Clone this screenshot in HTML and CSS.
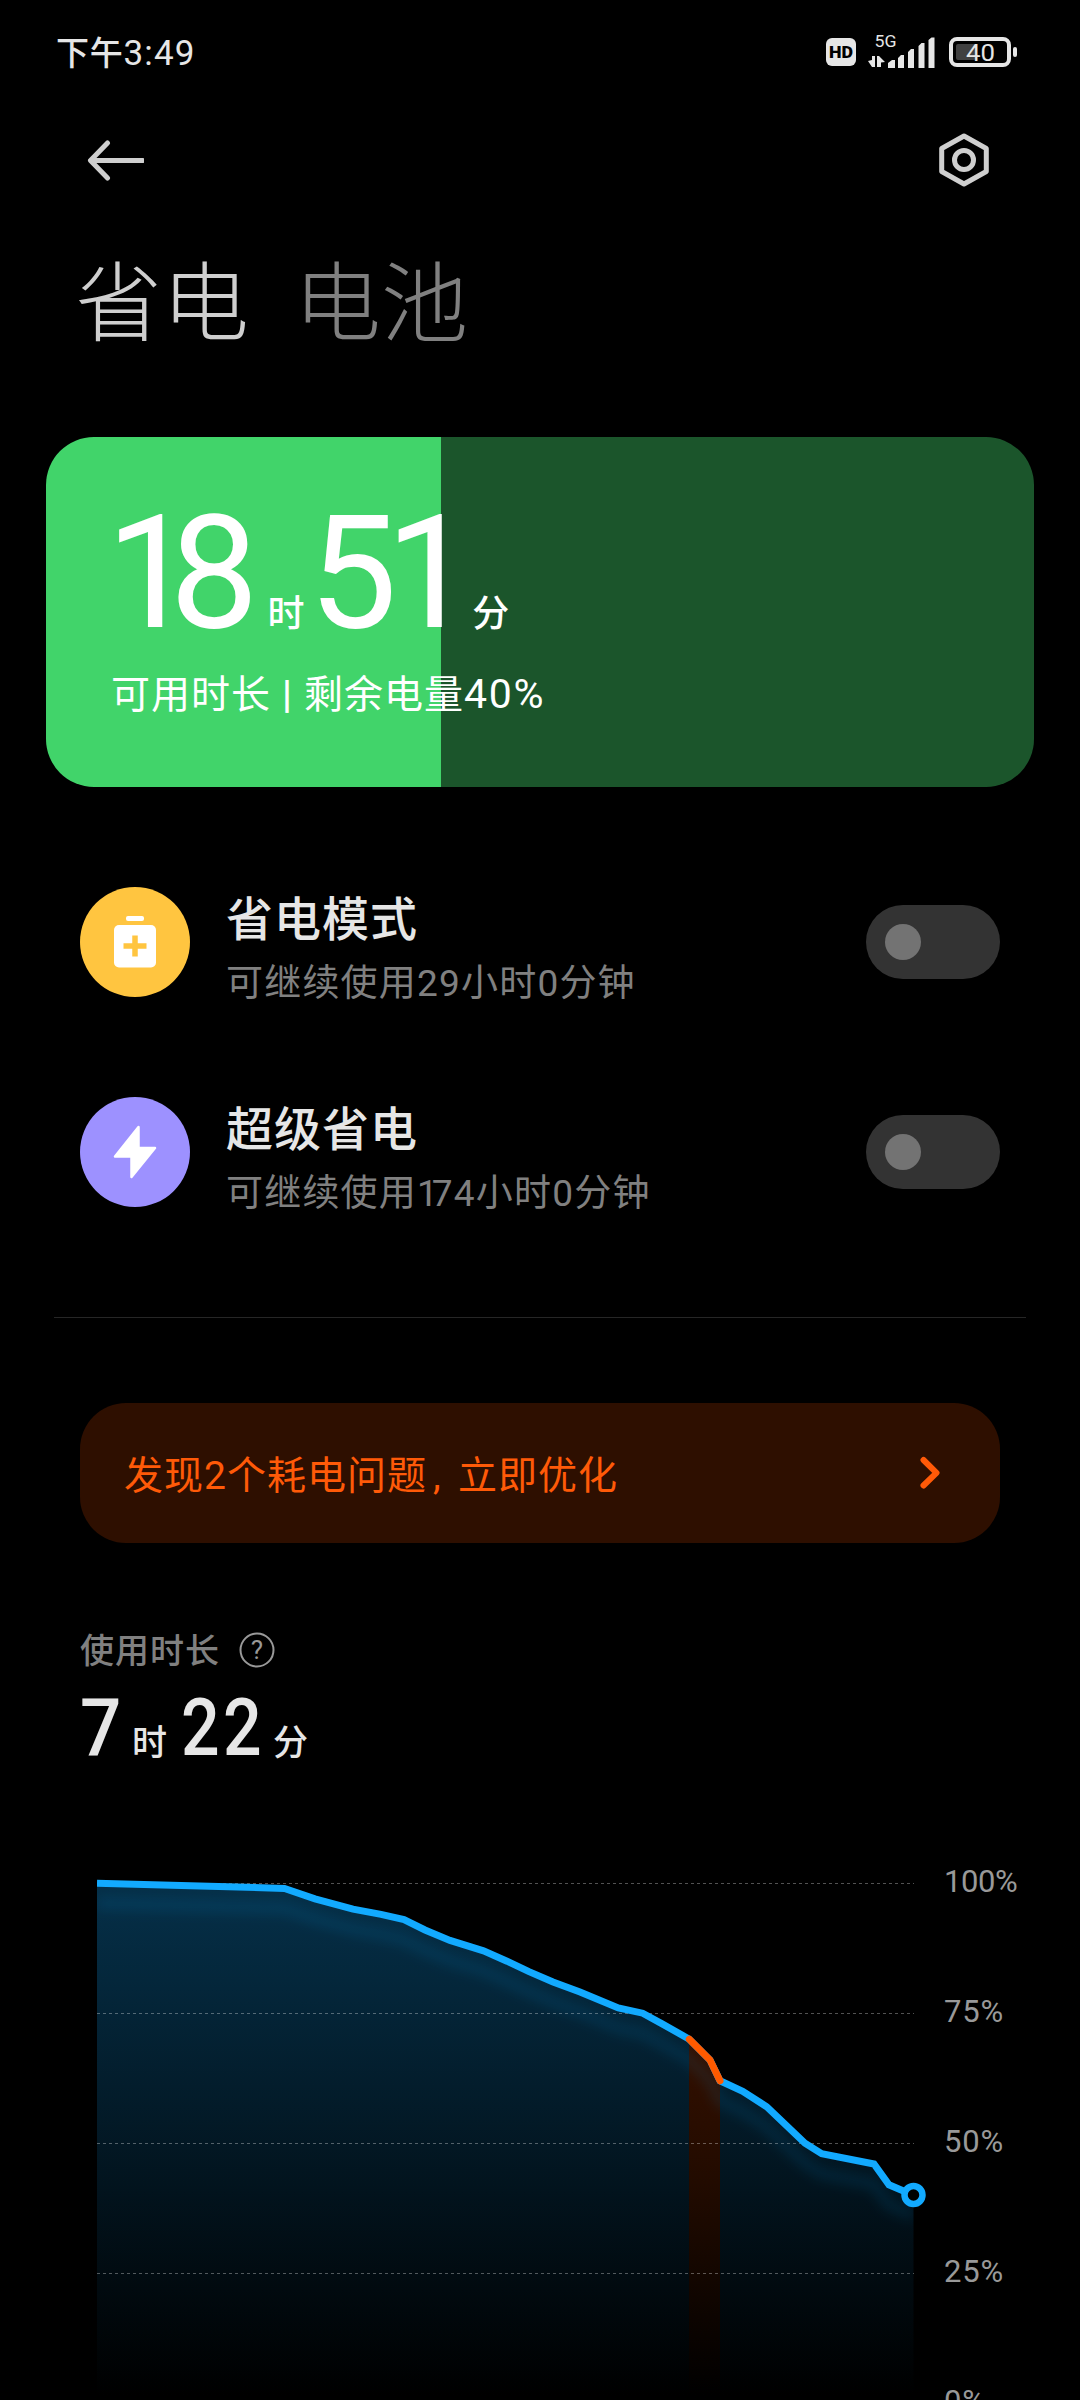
FILE: index.html
```html
<!DOCTYPE html>
<html lang="zh-CN">
<head>
<meta charset="utf-8">
<title>省电</title>
<link rel="stylesheet" href="styles.css">
</head>
<body>
<div class="screen">
  <header class="status">
    <span class="clock">下午<span class="clock-digits">3:49</span></span>
    <svg class="status-icons" width="194" height="40" viewBox="824 32 194 40">
      <rect x="826" y="38" width="30" height="28" rx="6" fill="#e6e6e6"/>
      <text class="hd" x="829" y="57.5" textLength="24" lengthAdjust="spacingAndGlyphs">HD</text>
      <text class="net" x="874.5" y="46.8" textLength="22" lengthAdjust="spacingAndGlyphs">5G</text>
      <path fill="#e6e6e6" d="M868 61l4-1v-4h3v11h-3zM877 67V56h2l6 6-4 .5V67zM888 68v-5l4-3h3v8zM898 68V58l3-3h3v13zM908 68V52l3-3h3v19zM918.500 68V46l3-3h3v25zM928.500 68V40l3-2.500h3V68z"/>
      <rect x="951" y="39" width="58" height="26" rx="6" fill="none" stroke="#e6e6e6" stroke-width="4"/>
      <rect x="956" y="44" width="20" height="16" rx="2" fill="#404040"/>
      <rect x="1013" y="47" width="4" height="10" rx="2" fill="#e6e6e6"/>
      <text class="level" x="966" y="61" textLength="29" lengthAdjust="spacingAndGlyphs">40</text>
    </svg>
  </header>

  <nav class="toolbar">
    <svg width="60" height="44" viewBox="84 138 60 44" fill="none" stroke="#cfcfcf" stroke-width="5" stroke-linecap="round" stroke-linejoin="round"><path d="M142.500 160.500H91M107.500 143L90.500 160.500L107.500 178"/></svg>
    <svg width="54" height="58" viewBox="937 131 54 58" fill="none" stroke="#cfcfcf" stroke-width="5" stroke-linejoin="round"><path d="M964 136l22.300 12.500v23L964 184l-22.300-12.500v-23z"/><circle cx="964" cy="160" r="9.500"/></svg>
  </nav>

  <div class="tabs"><h1 class="tab">省电</h1><span class="tab tab-off">电池</span></div>

  <section class="hero">
    <div class="hero-time"><span class="big hours">18</span><span class="unit">时</span><span class="big minutes">51</span><span class="unit">分</span></div>
    <div class="hero-note">可用时长<span class="bar">|</span>剩余电量<span class="percent">40%</span></div>
  </section>

  <section class="modes">
    <div class="mode">
      <svg width="110" height="110" viewBox="0 0 110 110"><circle cx="55" cy="55" r="55" fill="#ffc540"/><rect x="46" y="29" width="18" height="5" rx="2" fill="#fff"/><rect x="34" y="38" width="42" height="42.500" rx="5" fill="#fff"/><path d="M55 48.500v21M43.500 59h23" stroke="#ffc540" stroke-width="5.500"/></svg>
      <div class="mode-text"><div class="mode-title">省电模式</div><div class="mode-note">可继续使用29小时0分钟</div></div>
      <span class="switch"><span class="knob"></span></span>
    </div>
    <div class="mode">
      <svg width="110" height="110" viewBox="0 0 110 110"><circle cx="55" cy="55" r="55" fill="#9d91ff"/><path d="M58.500 30v21H75L51.500 80V59.500H35z" fill="#fff" stroke="#fff" stroke-width="2.500" stroke-linejoin="round"/></svg>
      <div class="mode-text"><div class="mode-title">超级省电</div><div class="mode-note">可继续使用<span class="one">1</span>74小时0分钟</div></div>
      <span class="switch"><span class="knob"></span></span>
    </div>
  </section>

  <hr class="rule">

  <section class="alert">
    <span class="alert-text">发现2个耗电问题<span class="comma">,</span>立即优化</span>
    <svg width="24" height="34" viewBox="0 0 24 34" fill="none" stroke="#ff5a08" stroke-width="6" stroke-linecap="round" stroke-linejoin="round"><path d="M5.500 4L18.500 16.800L5.500 29.500"/></svg>
  </section>

  <section class="usage">
    <div class="usage-head"><span class="usage-label">使用时长</span><svg width="36" height="36" viewBox="0 0 36 36"><circle cx="18" cy="18" r="16.500" fill="none" stroke="#999" stroke-width="2"/><text class="help" x="18" y="27" text-anchor="middle">?</text></svg></div>
    <div class="usage-time"><span class="mid mid-hours">7</span><span class="unit2">时</span><span class="mid mid-minutes">22</span><span class="unit2">分</span></div>
  </section>

  <section class="chart">
    <svg class="plot" width="834" height="540" viewBox="97 1860 834 540">
      <defs>
        <linearGradient id="blue" gradientUnits="userSpaceOnUse" x1="0" y1="1883" x2="0" y2="2395"><stop offset="0" stop-color="#053049"/><stop offset="1" stop-color="#000"/></linearGradient>
        <linearGradient id="orange" gradientUnits="userSpaceOnUse" x1="0" y1="2040" x2="0" y2="2395"><stop offset="0" stop-color="#331000"/><stop offset=".4" stop-color="#220b00"/><stop offset="1" stop-color="#000"/></linearGradient>
        <path id="level" d="M97 1883.200L284.500 1888.400L315 1898.800L353 1909.200L381 1914.400L404 1919.600L425 1930L450 1940.400L483.500 1950.800L507 1961.200L529 1971.600L553 1982L580 1992L618.300 2008L642.700 2013.200L661.700 2023.600L689.300 2039.200L710 2060L720 2080.800L742.700 2091.200L766.700 2106.800L805 2143.200L821.700 2153.600L874 2164L889 2184.800L913.500 2195.200"/>
        <clipPath id="area"><path d="M97 1883.200L284.500 1888.400L315 1898.800L353 1909.200L381 1914.400L404 1919.600L425 1930L450 1940.400L483.500 1950.800L507 1961.200L529 1971.600L553 1982L580 1992L618.300 2008L642.700 2013.200L661.700 2023.600L689.300 2039.200L710 2060L720 2080.800L742.700 2091.200L766.700 2106.800L805 2143.200L821.700 2153.600L874 2164L889 2184.800L913.500 2195.200V2400H97z"/></clipPath>
        <filter id="soft" filterUnits="userSpaceOnUse" x="80" y="1860" width="860" height="420"><feGaussianBlur stdDeviation="6"/></filter>
      </defs>
      <g clip-path="url(#area)">
        <rect x="97" y="1870" width="817" height="530" fill="url(#blue)"/>
        <rect x="689" y="1870" width="31" height="530" fill="url(#orange)"/>
        <use href="#level" y="20" fill="none" stroke="#12aaff" stroke-opacity=".1" stroke-width="12" filter="url(#soft)"/>
      </g>
      <path d="M97 1883.500H914M97 2013.500H914M97 2143.500H914M97 2273.500H914" stroke="#fff" stroke-opacity=".32" stroke-dasharray="3 3"/>
      <use href="#level" fill="none" stroke="#12aaff" stroke-width="7"/>
      <path d="M689.300 2039.200L710 2060L720 2080.800" fill="none" stroke="#ff5a00" stroke-width="7" stroke-linecap="round" stroke-linejoin="round"/>
      <circle cx="913.500" cy="2195" r="9" fill="#000" stroke="#12aaff" stroke-width="6.500"/>
    </svg>
    <div class="scale"><span class="full">100%</span><span>75%</span><span>50%</span><span>25%</span><span>0%</span></div>
  </section>
</div>
</body>
</html>
```
FILE: styles.css
```css
* { box-sizing: border-box; }
body { margin: 0; background: #000; }
svg { display: block; flex: none; }
.screen {
  width: 1080px; height: 2400px; overflow: hidden;
  background: #000; color: #e6e6e6;
  font-family: Roboto, "Noto Sans CJK SC", sans-serif;
  white-space: nowrap;
}
.status { display: flex; justify-content: space-between; height: 104px; padding: 32px 62px 0 56px; }
.clock { font-size: 33px; line-height: 43px; letter-spacing: .7px; font-weight: 500; }
.clock-digits { font-size: 35px; font-weight: 400; letter-spacing: 1.2px; }
.hd { font: 900 17px Roboto, sans-serif; fill: #000; }
.net { font: 400 16px Roboto, sans-serif; fill: #e6e6e6; }
.level { font: 400 24px Roboto, sans-serif; fill: #e6e6e6; }

.toolbar { display: flex; align-items: center; justify-content: space-between; height: 112px; padding: 0 89px 0 84px; }

.tabs { display: flex; gap: 45px; height: 221px; padding: 39px 0 0 75px; }
.tab { margin: 0; font-size: 87px; line-height: 100px; font-weight: 300; color: #cfcfcf; }
.tab-off { color: #808080; }

.hero {
  width: 988px; height: 350px; margin-left: 46px; padding: 58px 0 0 65px;
  border-radius: 48px; color: #fff;
  background: linear-gradient(90deg, #41d46a 40%, #1b552b 40%);
}
.hero-time { display: flex; align-items: baseline; height: 156px; line-height: 156px; }
.big { font-size: 158px; }
.hours { margin: 0 34px 0 -5px; letter-spacing: -25px; }
.minutes { margin: 0 10px 0 4px; letter-spacing: -12px; }
.unit { font-size: 37px; font-weight: 500; }
.hero-note { font-size: 39px; line-height: 86px; letter-spacing: 1px; }
.bar { display: inline-block; width: 33px; text-align: center; font-weight: 700; }
.percent { font-size: 41px; letter-spacing: 1.7px; }

.modes { display: flex; flex-direction: column; gap: 100px; height: 530px; padding: 100px 80px 0; }
.mode { display: flex; align-items: center; height: 110px; }
.mode-text { flex: 1; padding: 13px 0 0 36px; }
.mode-title { font-size: 47px; line-height: 69px; font-weight: 500; letter-spacing: 1px; }
.mode-note { font-size: 37px; line-height: 59px; letter-spacing: 1.2px; color: #808080; }
.one { letter-spacing: -6px; }
.switch { display: flex; align-items: center; width: 134px; height: 74px; padding-left: 19px; border-radius: 37px; background: #333; }
.knob { width: 36px; height: 36px; border-radius: 50%; background: #737373; }

.rule { width: 972px; height: 1px; margin: 0 0 85px 54px; border: 0; background: #262626; }

.alert {
  display: flex; align-items: center; justify-content: space-between;
  width: 920px; height: 140px; margin-left: 80px; padding: 0 58px 0 44px;
  border-radius: 46px; background: #2e0f00; color: #ff5a08;
}
.alert-text { padding-bottom: 3px; font-size: 39px; letter-spacing: 1px; }
.comma { display: inline-block; width: 31px; padding-left: 6px; }

.usage { height: 317px; padding: 82px 0 0 80px; }
.usage-head { display: flex; align-items: center; gap: 19px; height: 50px; color: #808080; }
.usage-label { padding-bottom: 4px; font-size: 34px; font-weight: 500; letter-spacing: 1px; }
.help { font: 400 26px Roboto, sans-serif; fill: #999; }
.usage-time { display: flex; align-items: baseline; height: 100px; line-height: 106px; }
.mid { flex: none; font-size: 79px; font-weight: 500; transform-origin: left; }
.mid-hours { width: 52px; transform: scaleX(.92); }
.mid-minutes { width: 92px; margin-left: 14px; transform: scaleX(.86); letter-spacing: 3.8px; }
.unit2 { font-size: 35px; font-weight: 500; }

.chart { display: flex; height: 540px; padding-left: 97px; }
.plot { flex: none; }
.scale { display: flex; flex-direction: column; padding: 3px 0 0 13px; font-size: 31px; letter-spacing: .8px; color: #999; }
.scale span { flex: none; height: 130px; line-height: 38px; }
.full { letter-spacing: -.4px; }
```
